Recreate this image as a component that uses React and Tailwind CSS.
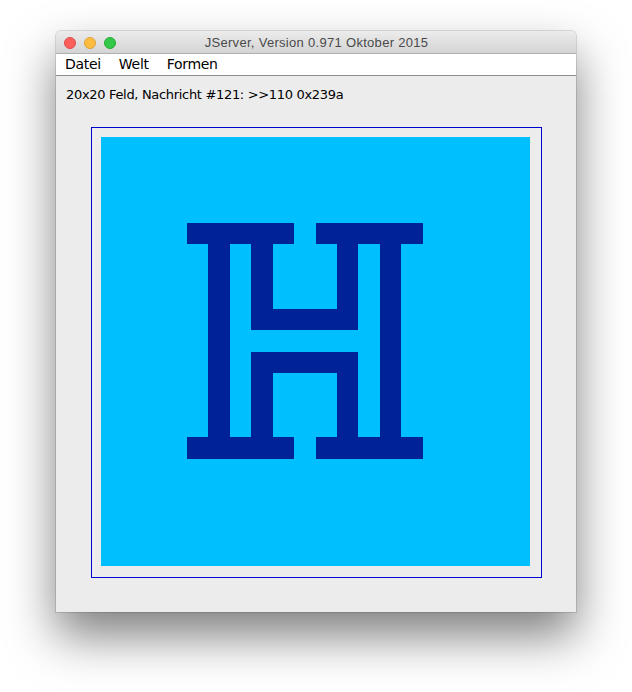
const FIELD = [
  "....................",
  "....................",
  "....................",
  "....................",
  "....XXXXX.XXXXX.....",
  ".....X.X...X.X......",
  ".....X.X...X.X......",
  ".....X.X...X.X......",
  ".....X.XXXXX.X......",
  ".....X.......X......",
  ".....X.XXXXX.X......",
  ".....X.X...X.X......",
  ".....X.X...X.X......",
  ".....X.X...X.X......",
  "....XXXXX.XXXXX.....",
  "....................",
  "....................",
  "....................",
  "....................",
  "....................",
];

const TrafficLights = () => (
  <div className="absolute left-[8px] top-[6px] flex gap-[8px]">
    <span className="w-[12px] h-[12px] rounded-full bg-[#fc605c] border border-[#de4a46]" />
    <span className="w-[12px] h-[12px] rounded-full bg-[#fdbc40] border border-[#dea236]" />
    <span className="w-[12px] h-[12px] rounded-full bg-[#34c84a] border border-[#27aa36]" />
  </div>
);

const App = () => {
  return (
    <div className="w-[632px] h-[692px] bg-white pt-[31px] pl-[56px] overflow-hidden">
      <div className="w-[520px] h-[581px] bg-[#ececec] rounded-t-[5px] flex flex-col shadow-[0_24px_48px_rgba(0,0,0,0.5),0_0_0_1px_rgba(0,0,0,0.12)]">
        <div className="relative h-[23px] shrink-0 rounded-t-[5px] bg-gradient-to-b from-[#ececec] to-[#d4d4d4] border-b border-[#b0b0b0] flex items-center justify-center">
          <TrafficLights />
          <span className="text-[13px] text-[#4a4a4a] font-['Liberation_Sans',sans-serif] leading-none tracking-[0.3px] pl-[1px]">
            JServer, Version 0.971 Oktober 2015
          </span>
        </div>
        <div className="h-[22px] shrink-0 bg-white border-b border-[#8c8c8c] flex items-center gap-[18px] pl-[9px] text-[14px] text-black font-['DejaVu_Sans',sans-serif] tracking-[-0.3px]">
          <span>Datei</span>
          <span>Welt</span>
          <span>Formen</span>
        </div>
        <div className="flex-1 flex flex-col">
          <p className="mt-[11px] ml-[10px] text-[13px] leading-[16px] text-black font-['DejaVu_Sans',sans-serif] tracking-[-0.32px]">
            20x20 Feld, Nachricht #121: &gt;&gt;110 0x239a
          </p>
          <div className="mt-[24px] ml-[35px] w-[451px] h-[451px] border border-[#0000d0] pt-[9px] pl-[9px]">
            <div className="w-[429px] h-[429px] grid grid-cols-[repeat(20,1fr)] grid-rows-[repeat(20,1fr)] bg-[#00bfff]">
              {FIELD.flatMap((row, r) =>
                row.split("").map((c, i) => (
                  <div
                    key={r + "-" + i}
                    className={c === "X" ? "bg-[#002299]" : "bg-[#00bfff]"}
                  />
                ))
              )}
            </div>
          </div>
        </div>
      </div>
    </div>
  );
};

export default App;
